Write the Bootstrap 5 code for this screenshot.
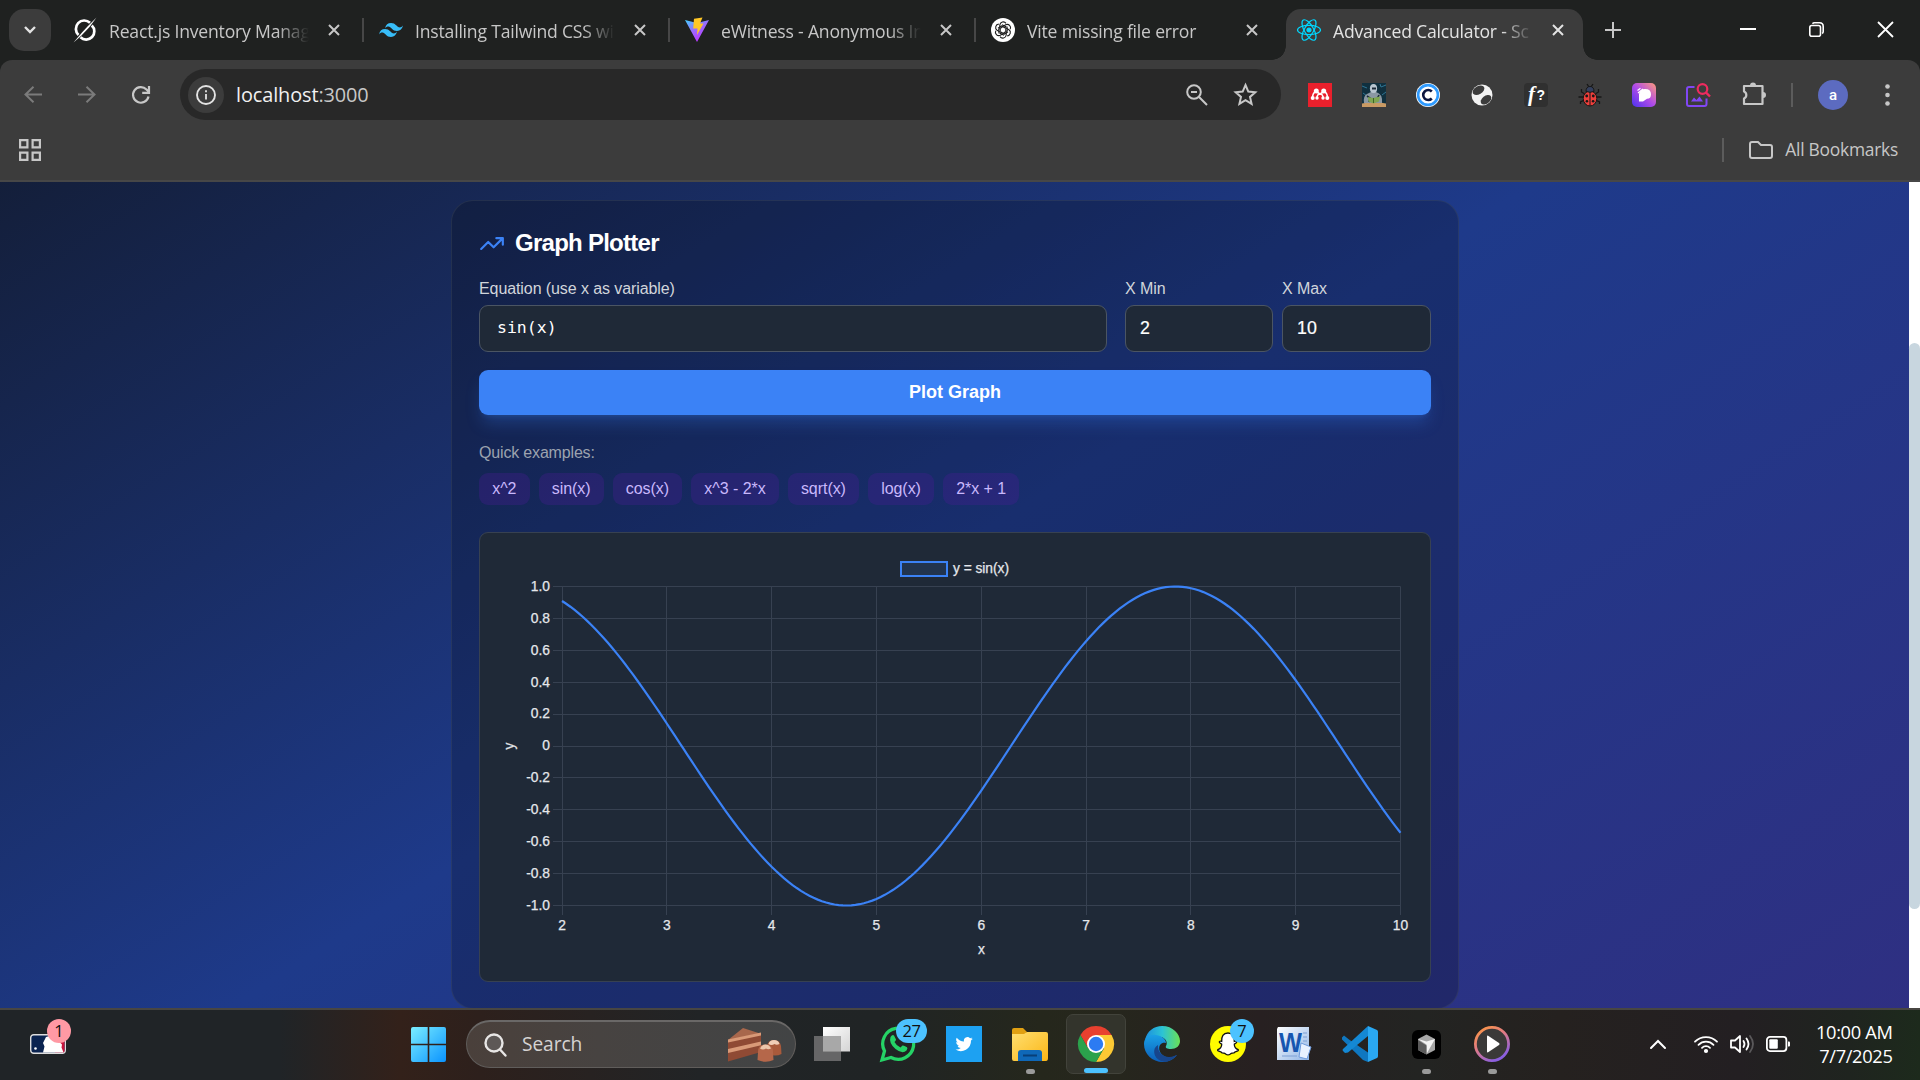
<!DOCTYPE html>
<html lang="en" data-bs-theme="dark">
<head>
<meta charset="utf-8">
<title>Advanced Calculator - Scientific</title>
<link href="https://cdn.jsdelivr.net/npm/bootstrap@5.3.0/dist/css/bootstrap.min.css" rel="stylesheet">
<style>
html,body{width:1920px;height:1080px;overflow:hidden}
body{font-family:"Open Sans","Noto Sans",sans-serif;background:#1f2120;color:#e3e3e3}
svg{display:block;overflow:visible;flex:none}
/* tab strip */
.tabstrip{height:60px;background:#1f2120;padding-left:9px}
.tab-search{width:42px;height:42px;border-radius:15px;background:#3c3c3c;margin-right:7px}
.btab{width:306px;height:60px;padding-left:15px;position:relative;color:#c7c7c7;font-size:17.6px}
.btab .ttl{width:201px;margin-left:12px;padding-top:3px;white-space:nowrap;letter-spacing:-.2px;-webkit-mask-image:linear-gradient(90deg,#000 168px,transparent 200px)}
.btab .cls{margin-left:18px}
.btab.split::after{content:"";position:absolute;right:0;top:18px;width:2px;height:24px;background:#474747}
.btab.on{width:297px;height:51px;margin:9px 0 0 4px;padding:0 0 9px 11px;background:#3c3c3c;border-radius:15px 15px 0 0;color:#e3e3e3}
.btab.on .cls{margin-left:18px}
.btab.on::before,.btab.on::after{content:"";position:absolute;bottom:0;width:14px;height:14px}
.btab.on::before{left:-14px;background:radial-gradient(circle at 0 0,transparent 13.5px,#3c3c3c 14px)}
.btab.on::after{right:-14px;background:radial-gradient(circle at 100% 0,transparent 13.5px,#3c3c3c 14px)}
.newtab{width:60px;height:60px}
.winbtn{width:69px;height:58px}
/* toolbar */
.toolbar{height:60px;background:#3c3c3c;padding:9px 0 0 6px;border-radius:12px 12px 0 0}
.cell54{width:54px;height:51px}
.omni{width:1101px;height:51px;border-radius:26px;background:#282828;margin:0 12px;padding:0 23px 0 8px}
.info-dot{width:36px;height:36px;border-radius:50%;background:#3c3c3c}
.url{font-size:19.9px;margin-left:12px;letter-spacing:-.1px;color:#c7c7c7}
.url b{font-weight:400;color:#f1f1f1}
.vline{width:2px;height:24px;background:#5c5c5c}
.avatar{width:30px;height:30px;border-radius:50%;background:#5c6bc0;font:500 15px Roboto,sans-serif;color:#fff}
.bookbar{height:62px;background:#3c3c3c;border-bottom:2px solid #474747;padding:0 22px 0 19px;font-size:17.4px;color:#c7c7c7}
/* page */
.view{height:826px;overflow:hidden}
.page-bg{width:1909px;background:linear-gradient(to bottom right,#111827,#1e3a8a,#312e81) 0 -235px/1909px 1205px no-repeat;font-family:"Liberation Sans",Arial,sans-serif;padding:18px 0 0 451px}
.plot-card{width:1008px;height:809px;border:1.5px solid rgba(75,85,99,.3);border-radius:22px;background:rgba(0,0,0,.2);padding:25px 27px 0 27px}
.plot-card h2{font-size:24px;letter-spacing:-.74px;line-height:34px;margin:0 0 0 10px;color:#fff;font-weight:700}
.lbl{font-size:16px;line-height:24px;color:#d1d5db;letter-spacing:-.09px;padding-top:1px;margin-bottom:4px}
.field{height:47px;border:1px solid #4b5563;border-radius:9px;background:#1f2937;color:#fff;font-size:17.8px;padding:0 14px;-webkit-text-stroke:.2px #fff}
.field.mono{font-family:"DejaVu Sans Mono",monospace;font-size:16.5px;padding-left:17px;-webkit-text-stroke:0}
.w-eq{width:628px}.w-min{width:148px}.w-max{width:149px}
.btn-plot{height:45px;border:0;border-radius:9px;background:#3b82f6;color:#fff;font-weight:700;font-size:18px;margin-top:18px;box-shadow:0 11px 16px -3px rgba(59,130,246,.26),0 4px 6px -4px rgba(59,130,246,.26)}
.quick{font-size:16px;line-height:24px;letter-spacing:-.17px;color:#9ca3af;margin:26px 0 8px}
.chip{height:32px;border-radius:9px;background:rgba(76,29,149,.32);color:#c9b8fc;font-size:16px;letter-spacing:-.05px;padding:0 13.2px;line-height:31px}
.chart-box{margin-top:27px;height:450px;border:1px solid #374151;border-radius:9px;background:#1f2937}
.chart-box text{font:13.8px "Liberation Sans",Arial,sans-serif;fill:#e5e7eb;stroke:#e5e7eb;stroke-width:.25px}
.sbar{width:11px;background:#fff;padding-top:161px}
.thumb{height:566px;border-radius:6px;background:#c8d6df}
/* taskbar */
.taskbar{height:72px;border-top:2px solid #484642;padding-bottom:2px;background:linear-gradient(90deg,#202427 0,#202427 280px,#33211a 400px,#2d201c 480px,#212426 700px,#202425 880px,#25271c 1040px,#26261d 1120px,#272021 1260px,#232422 1420px,#25211f 1560px,#231f22 1740px,#1f241f 1850px,#1d2a1c 1920px)}
.widget{width:36px;margin-left:30px;position:relative}
.start{margin-left:345px}
.find{width:330px;height:48px;border-radius:24px;margin:0 3px 0 20px;background:linear-gradient(90deg,#4a403b,#474341 40%,#424445);border:1px solid #605d5b;border-top:2px solid #6a6867;padding:0 13px 0 15px;font-size:19.2px;color:#d5d3d2}
.tapp{width:66px;height:60px;position:relative}
.tapp.run::after{content:"";position:absolute;left:28.500px;bottom:0;width:9px;height:5px;border-radius:3px;background:#9a9a9a}
.tapp.cur{background:#33342c;border:1px solid #42433b;border-radius:7px;width:60px;margin:0 3px}
.tapp.cur::after{content:"";position:absolute;left:17px;bottom:0;width:24px;height:5px;border-radius:3px;background:#4cc2ff}
.cnt{position:absolute;height:24px;border-radius:15px;background:#4cc2ff;color:#101010;font-size:16.5px;line-height:23px;text-align:center}
.cnt.c1{left:17px;top:-15.500px;width:24px;background:#ff99a4}
.cnt.c27{left:31px;top:5px;width:31px;letter-spacing:-.5px}
.cnt.c7{left:35px;top:5px;width:24px}
.clock{font-size:18.3px;line-height:24px;text-align:right;color:#fff;letter-spacing:-.35px;width:113px;margin-left:-10px;margin-right:27.500px;padding-bottom:1px}
</style>
<script src="https://cdn.jsdelivr.net/npm/bootstrap@5.3.0/dist/js/bootstrap.bundle.min.js"></script>
</head>
<body>
<svg width="0" height="0" class="position-absolute">
 <defs>
  <symbol id="x" viewBox="0 0 12 12"><path d="M1 1l10 10M11 1L1 11" stroke="currentColor" stroke-width="2" fill="none"/></symbol>
  <linearGradient id="vt" x1="0" y1="0" x2=".6" y2="1"><stop stop-color="#41d1ff"/><stop offset=".5" stop-color="#9a6bff"/><stop offset="1" stop-color="#bd34fe"/></linearGradient>
  <linearGradient id="win" gradientUnits="userSpaceOnUse" x1="0" y1="0" x2="35" y2="35"><stop stop-color="#7beeff"/><stop offset="1" stop-color="#0a93ff"/></linearGradient>
  <linearGradient id="pk" x1="0" y1="1" x2="1" y2="0"><stop stop-color="#4a32f0"/><stop offset=".5" stop-color="#b04be8"/><stop offset="1" stop-color="#ff9b7a"/></linearGradient>
  <linearGradient id="fold" x1="0" y1="0" x2="1" y2="1"><stop stop-color="#ffdf70"/><stop offset="1" stop-color="#fbb616"/></linearGradient>
  <linearGradient id="e1" x1="0" y1="0" x2="1" y2="0"><stop stop-color="#1c8fe0"/><stop offset=".5" stop-color="#2cc3d4"/><stop offset="1" stop-color="#6be055"/></linearGradient>
  <linearGradient id="e2" x1="0" y1="0" x2="0" y2="1"><stop stop-color="#1aa0e6"/><stop offset="1" stop-color="#0c5db8"/></linearGradient>
  <linearGradient id="md" x1="0" y1="0" x2=".6" y2="1"><stop stop-color="#ff9a3c"/><stop offset=".5" stop-color="#e07a86"/><stop offset="1" stop-color="#8a5fe0"/></linearGradient>
  <linearGradient id="tv" x1="0" y1="0" x2="1" y2="1"><stop stop-color="#fff"/><stop offset="1" stop-color="#d4d4d4"/></linearGradient>
  <linearGradient id="wd" x1="0" y1="0" x2="1" y2="1"><stop stop-color="#fff"/><stop offset="1" stop-color="#8fb4e6"/></linearGradient>
 </defs>
</svg>

<header>
 <div class="tabstrip d-flex">
  <button class="tab-search btn p-0 border-0 d-flex align-items-center justify-content-center align-self-center"><svg width="12" height="8" viewBox="0 0 12 8"><path d="M1 1l5 5 5-5" fill="none" stroke="#e3e3e3" stroke-width="2.400"/></svg></button>
  <div class="btab split d-flex align-items-center">
   <svg width="24" height="24" viewBox="0 0 24 24" fill="none" stroke="#fff"><path d="M17 4.800A8 8 0 0 0 5.500 17M7.500 19.300A8 8 0 0 0 18.800 7.500" stroke-width="2.700"/><path d="M23.500-.5L14.500 8.500 9 14.500.5 24.500 8 18l8.500-9z" fill="#fff" stroke="none"/></svg>
   <span class="ttl">React.js Inventory Manag</span><svg class="cls" width="12" height="12"><use href="#x"/></svg>
  </div>
  <div class="btab split d-flex align-items-center">
   <svg width="24" height="24" viewBox="0 0 24 24"><path id="tw" d="M6 10.500c.8-3.600 2.800-5.400 6-5.400 4.800 0 5.400 3.600 7.800 4.200 1.600.4 3-.2 4.200-1.800-.8 3.600-2.800 5.400-6 5.400-4.800 0-5.400-3.600-7.800-4.200-1.600-.4-3 .2-4.200 1.800z" fill="#38bdf8"/><use href="#tw" x="-6" y="6"/></svg>
   <span class="ttl">Installing Tailwind CSS wi</span><svg class="cls" width="12" height="12"><use href="#x"/></svg>
  </div>
  <div class="btab split d-flex align-items-center">
   <svg width="24" height="24" viewBox="0 0 24 24"><path d="M0 2l12 22L24 2l-12 3z" fill="url(#vt)"/><path d="M9 .8l8.500-1.300-2.500 6h3.500L12 17l.5-6.500H8.200z" fill="#ffc726"/></svg>
   <span class="ttl">eWitness - Anonymous In</span><svg class="cls" width="12" height="12"><use href="#x"/></svg>
  </div>
  <div class="btab d-flex align-items-center">
   <svg width="24" height="24" viewBox="-12 -12 24 24"><circle r="12" fill="#fff"/><g fill="none" stroke="#1c1c1c" stroke-width="1.100"><path id="oa" d="M-3.200-1.800V-5A3.400 3.400 0 0 1 3-6.600M-1-5.200L2.800-3.300V1"/><use href="#oa" transform="rotate(60)"/><use href="#oa" transform="rotate(120)"/><use href="#oa" transform="rotate(180)"/><use href="#oa" transform="rotate(240)"/><use href="#oa" transform="rotate(300)"/></g></svg>
   <span class="ttl">Vite missing file error</span><svg class="cls" width="12" height="12"><use href="#x"/></svg>
  </div>
  <div class="btab on d-flex align-items-center">
   <svg width="24" height="24" viewBox="-12 -12 24 24" fill="none" stroke="#00d8ff" stroke-width="1.200"><ellipse rx="11.500" ry="4.600"/><ellipse rx="11.500" ry="4.600" transform="rotate(60)"/><ellipse rx="11.500" ry="4.600" transform="rotate(120)"/><circle r="2" fill="#00d8ff"/></svg>
   <span class="ttl">Advanced Calculator - Sc</span><svg class="cls" width="12" height="12"><use href="#x"/></svg>
  </div>
  <div class="newtab d-flex align-items-center justify-content-center"><svg width="16" height="16" viewBox="0 0 16 16"><path d="M8 0v16M0 8h16" stroke="#c7c7c7" stroke-width="2"/></svg></div>
  <div class="d-flex ms-auto">
   <div class="winbtn d-flex align-items-center justify-content-center"><svg width="16" height="2"><path d="M0 1h16" stroke="#fff" stroke-width="2"/></svg></div>
   <div class="winbtn d-flex align-items-center justify-content-center"><svg width="15" height="15" viewBox="0 0 15 15" fill="none" stroke="#fff" stroke-width="1.600"><rect x=".8" y="3.500" width="10.700" height="10.700" rx="2"/><path d="M3.500 1.800Q4.200.8 5.500.8h5q3.700 0 3.700 3.700v5q0 1.300-1 2"/></svg></div>
   <div class="winbtn d-flex align-items-center justify-content-center"><svg width="15" height="15" viewBox="0 0 15 15"><path d="M0 0l15 15M15 0L0 15" stroke="#fff" stroke-width="1.800"/></svg></div>
  </div>
 </div>

 <div class="toolbar d-flex">
  <div class="cell54 d-flex align-items-center justify-content-center"><svg width="18" height="17" viewBox="0 0 18 17" fill="none" stroke="#7b7b7b" stroke-width="2"><path d="M18 8.500H2M9.500.7L1.500 8.500l8 7.800"/></svg></div>
  <div class="cell54 d-flex align-items-center justify-content-center"><svg width="18" height="17" viewBox="0 0 18 17" fill="none" stroke="#7b7b7b" stroke-width="2"><path d="M0 8.500h16M8.500.7l8 7.800-8 7.800"/></svg></div>
  <div class="cell54 d-flex align-items-center justify-content-center"><svg width="18" height="18" viewBox="0 0 18 18" fill="none" stroke="#c7c7c7" stroke-width="2.200"><path d="M16.500 10.500A7.800 7.800 0 1 1 14.500 3.500L17 6M17 0v6.800h-6.800"/></svg></div>
  <div class="omni d-flex align-items-center">
   <span class="info-dot d-flex align-items-center justify-content-center"><svg width="20" height="20" viewBox="0 0 20 20"><circle cx="10" cy="10" r="9" fill="none" stroke="#e3e3e3" stroke-width="1.900"/><path d="M10 9v5.500M10 5.300v2" stroke="#e3e3e3" stroke-width="1.800"/></svg></span>
   <span class="url"><b>localhost</b>:3000</span>
   <svg class="ms-auto" width="22" height="22" viewBox="0 0 22 22" fill="none" stroke="#c7c7c7" stroke-width="2"><circle cx="8" cy="8" r="6.800"/><path d="M5 8h6M12.800 12.800L21 21"/></svg>
   <svg style="margin-left:25px" width="25" height="24" viewBox="0 0 24 24" fill="none" stroke="#c7c7c7" stroke-width="2"><path d="M12 2l2.800 6.600 7 .6-5.300 4.700 1.600 7L12 17.200l-6.100 3.700 1.600-7L2.200 9.200l7-.6z"/></svg>
  </div>
  <div class="cell54 d-flex align-items-center justify-content-center"><svg width="24" height="24" viewBox="0 0 24 24"><path fill="#e9202c" d="M0 0h24v24H0z"/><path d="M4.700 15q-.5-4.500 3-6.500M19.300 15q.5-4.500-3-6.500M8 8.500l4 2.500 4-2.500M9 15q0-4 3-4t3 4" stroke="#fff" stroke-width="1.500" fill="none"/><g fill="#fff"><circle cx="8.300" cy="8" r="2.500"/><circle cx="15.700" cy="8" r="2.500"/><circle cx="4.700" cy="15" r="2"/><circle cx="19.300" cy="15" r="2"/><circle cx="9" cy="15" r="1.700"/><circle cx="15" cy="15" r="1.700"/></g></svg></div>
  <div class="cell54 d-flex align-items-center justify-content-center"><svg width="24" height="24" viewBox="0 0 24 24"><path fill="#10303f" d="M0 0h24v24H0z"/><path d="M0 3l5 2M19 4l5-2M1 10l4 3M24 9l-4 3M18 1l1 3" stroke="#2f7594"/><path d="M0 20.500q12-3 24 0V24H0z" fill="#c99a64"/><path d="M2 20q-1-7 3-9l4-2h5q7 2 6 11z" fill="#8b98a3"/><path d="M5 13l3 2-1 4M17 12l-2 4" stroke="#1c2d39" stroke-width="1.600" fill="none"/><ellipse cx="11.500" cy="5.500" rx="3.600" ry="4.500" fill="#b9c5cf"/><path d="M10 4.500h4v2h-4z" fill="#1d2b38"/><path d="M6 14l5 1 7-1.500-1 5-5.500 2-5-2z" fill="#7fa651"/><path d="M11.500 15v5" stroke="#3e6427"/></svg></div>
  <div class="cell54 d-flex align-items-center justify-content-center"><svg width="24" height="24" viewBox="0 0 24 24"><circle cx="12" cy="12" r="12" fill="#fff"/><circle cx="12" cy="12" r="9.900" fill="none" stroke="#2f9bff" stroke-width="2.600"/><path d="M15.800 8.500a5 5 0 1 0 0 7" fill="none" stroke="#0b1540" stroke-width="2.600"/></svg></div>
  <div class="cell54 d-flex align-items-center justify-content-center"><svg width="22" height="22" viewBox="0 0 22 22"><circle cx="11" cy="11" r="10.500" fill="#f3f3f3"/><ellipse cx="7.500" cy="6.300" rx="6.400" ry="4" transform="rotate(-30 7.500 6.300)" fill="#3c3c3c"/><ellipse cx="15" cy="15.800" rx="6" ry="3.900" transform="rotate(-38 15 15.800)" fill="#3c3c3c"/></svg></div>
  <div class="cell54 d-flex align-items-center justify-content-center"><svg width="24" height="24" viewBox="0 0 24 24"><rect width="24" height="24" rx="4" fill="#303030"/><text x="4" y="18" font-family="Liberation Serif,serif" font-style="italic" font-weight="700" font-size="21" fill="#fff">f</text><text x="12.500" y="17" font-family="Liberation Sans,sans-serif" font-weight="700" font-size="14" fill="#fff">?</text></svg></div>
  <div class="cell54 d-flex align-items-center justify-content-center"><svg width="24" height="24" viewBox="0 0 24 24"><path d="M3.500 6v3l4 2.500M20.500 6v3l-4 2.500M.5 14h23M2.500 21v-2l4-2M21.500 21v-2l-4-2M9 1l2 3M15 1l-2 3" stroke="#171717" stroke-width="1.300" fill="none"/><ellipse cx="12" cy="15.500" rx="6.800" ry="7.500" fill="#ee3f3b" stroke="#171717"/><path d="M8 8.500q0-5 4-5t4 5q-4 1.500-8 0z" fill="#34405e" stroke="#171717"/><path d="M12 9v14" stroke="#171717"/><g fill="#171717"><circle cx="8.700" cy="13" r="1.400"/><circle cx="15.300" cy="13" r="1.400"/><circle cx="8.900" cy="18.300" r="1.300"/><circle cx="15.100" cy="18.300" r="1.300"/></g></svg></div>
  <div class="cell54 d-flex align-items-center justify-content-center"><svg width="24" height="24" viewBox="0 0 24 24"><rect width="24" height="24" rx="5" fill="url(#pk)"/><path d="M7 18.500V11q1-5 6-5 6 0 6 5.200 0 4.500-4 4.500l-4 2.800z" fill="#fff"/><path d="M6 10l5-4M5.500 7.500l3-2.200" stroke="#fff" stroke-width="1.200"/></svg></div>
  <div class="cell54 d-flex align-items-center justify-content-center"><svg width="24" height="24" viewBox="0 0 24 24" fill="none" stroke="#8147f5" stroke-width="2"><path d="M8.500 4H3q-2 0-2 2v15q0 2 2 2h15.500q2 0 2-2v-5.500"/><path d="M5 18.500l3-4 2.500 2.500 3-3.500 3.500 5z" fill="#8147f5" stroke="none"/><circle cx="16.500" cy="6" r="4.800" stroke="#ee2b5f" stroke-width="2.200"/><path d="M19.800 9.300L24 13.500" stroke="#ee2b5f" stroke-width="2.400"/></svg></div>
  <div class="cell54 d-flex align-items-center justify-content-center ps-1"><svg width="25" height="25" viewBox="0 0 25 25"><path d="M2 4h18.500v18H2v-5.500a3.800 3.800 0 0 0 0-7z" fill="none" stroke="#c7c7c7" stroke-width="2.200" stroke-linejoin="round"/><path d="M8 3.500a3 3 0 0 1 6 0zM21 10a3 3 0 0 1 0 6z" fill="#c7c7c7"/></svg></div>
  <div class="d-flex align-items-center justify-content-center" style="width:26px"><span class="vline"></span></div>
  <div class="d-flex align-items-center justify-content-center" style="width:56px"><span class="avatar d-flex align-items-center justify-content-center">a</span></div>
  <div class="d-flex align-items-center justify-content-center" style="width:52px"><svg width="5" height="22" fill="#c7c7c7"><circle cx="2.500" cy="2.500" r="2.300"/><circle cx="2.500" cy="11" r="2.300"/><circle cx="2.500" cy="19.500" r="2.300"/></svg></div>
 </div>

 <div class="bookbar d-flex align-items-center">
  <svg width="22" height="22" viewBox="0 0 22 22" fill="none" stroke="#c7c7c7" stroke-width="2.200"><path d="M1.100 1.100h7.300v7.300H1.100zM13.600 1.100h7.300v7.300h-7.300zM1.100 13.600h7.300v7.300H1.100zM13.600 13.600h7.300v7.300h-7.300z"/></svg>
  <span class="vline ms-auto"></span>
  <svg style="margin:0 12px 0 25px" width="24" height="18" viewBox="0 0 24 18"><path d="M1 3q0-2 2-2h6l3 3h9q2 0 2 2v9q0 2-2 2H3q-2 0-2-2z" fill="none" stroke="#c7c7c7" stroke-width="2"/></svg>
  <span style="letter-spacing:-.24px;padding-bottom:2px">All Bookmarks</span>
 </div>
</header>

<main class="view d-flex">
 <div class="page-bg">
  <section class="plot-card">
   <div class="d-flex align-items-center">
    <svg width="26" height="26" viewBox="0 0 24 24" fill="none" stroke="#3b82f6" stroke-width="2" stroke-linejoin="round" stroke-linecap="round"><path d="M22 7.500l-8.500 8.500-5-5L2 17.500M16 7.500h6v6"/></svg>
    <h2>Graph Plotter</h2>
   </div>
   <div class="d-flex" style="margin-top:16px">
    <div class="w-eq"><div class="lbl">Equation (use x as variable)</div><div class="field mono d-flex align-items-center">sin(x)</div></div>
    <div class="w-min" style="margin-left:18px"><div class="lbl">X Min</div><div class="field d-flex align-items-center">2</div></div>
    <div class="w-max" style="margin-left:9px"><div class="lbl">X Max</div><div class="field d-flex align-items-center">10</div></div>
   </div>
   <button class="btn btn-plot w-100 p-0 d-block">Plot Graph</button>
   <div class="quick">Quick examples:</div>
   <div class="d-flex" style="gap:8.900px">
    <span class="chip">x^2</span><span class="chip">sin(x)</span><span class="chip">cos(x)</span><span class="chip">x^3 - 2*x</span><span class="chip">sqrt(x)</span><span class="chip">log(x)</span><span class="chip">2*x + 1</span>
   </div>
   <div class="chart-box"><svg id="chart" width="950" height="448" viewBox="480 533 950 448"></svg></div>
  </section>
 </div>
 <div class="sbar"><div class="thumb"></div></div>
</main>

<footer class="taskbar d-flex align-items-center">
 <div class="widget"><svg width="36" height="20" viewBox="0 0 36 20"><rect x=".7" y=".7" width="34.600" height="18.600" rx="3" fill="#0a2350" stroke="#ddd" stroke-width="1.400"/><path d="M25 1.500h8q1.500 0 1.500 1.500v14q0 1.500-1.500 1.500h-8z" fill="#c8143c"/><path d="M13 18.500l1.500-6L13 9l3-6 5-1.500h5l2 5 4 4-.5 3 2 5z" fill="#fff"/><circle cx="5.500" cy="14.500" r="1.300" fill="#fff"/></svg><span class="cnt c1">1</span></div>
 <svg class="start" width="35" height="35" viewBox="0 0 35 35"><path d="M2 0h14.700v16.700H0V2q0-2 2-2zM18.300 0H33q2 0 2 2v14.700H18.300zM0 18.300h16.700V35H2q-2 0-2-2zM18.300 18.300H35V33q0 2-2 2H18.300z" fill="url(#win)"/></svg>
 <div class="find d-flex align-items-center">
  <svg width="26" height="26" viewBox="0 0 26 26" fill="#5d5856" stroke="#e8e6e5" stroke-width="2.400"><circle cx="12" cy="11" r="8.500"/><path d="M18 17.500l5.500 6" stroke-linecap="round"/></svg>
  <span style="margin-left:14px;letter-spacing:-.1px">Search</span>
  <svg class="ms-auto" width="54" height="34" viewBox="0 0 54 34"><path d="M0 12L15 0l17 5.500V9L0 15z" fill="#a8674c"/><path d="M0 12L33 5v19L0 33.500z" fill="#8f4a34"/><path d="M0 11.500L33 4.500v3L0 14.500zM0 21L33 13.500v3.800L0 25z" fill="#d99a78"/><path d="M39 18q1-6 7-6t7 6l.5 8q-6 3-14 0z" fill="#a95a3b"/><path d="M40.500 16q1-4 5.500-4t5.500 4q-3 1.500-5 0-3 2-6 0z" fill="#f0cdb6"/><path d="M30 24q0-7.500 7.500-7.500T45 24l.5 8q-7.500 3.500-16 0z" fill="#b5674a"/><path d="M32 20.500q1.500-4 5.500-4t5.500 4q-3 1.500-5 0-3 2-6 0z" fill="#edc5aa"/></svg>
 </div>
 <div class="tapp d-flex align-items-center justify-content-center"><svg width="36" height="34" viewBox="0 0 36 34"><path d="M9 0h27v24.500H9z" fill="url(#tv)"/><path d="M0 9h27v25H0z" fill="#6d6d6d" fill-opacity=".92"/><path d="M9 9h18v15.500H9z" fill="#a8a8a8"/></svg></div>
 <div class="tapp d-flex align-items-center justify-content-center"><svg width="36" height="36" viewBox="0 0 36 36"><path d="M2 34l2.500-9A15.500 15.500 0 1 1 11 31.500z" fill="none" stroke="#25d366" stroke-width="3.300"/><path d="M10.500 11q2-3 3.500-1.500l2 4q0 1-1.500 2.500 2 4 6 5.500l2-2q1-.5 4.500 1.700 1 .8-.5 3.300-4 4-11-1.500-7-6-5-12z" fill="#25d366"/></svg><span class="cnt c27">27</span></div>
 <div class="tapp d-flex align-items-center justify-content-center"><svg width="36" height="36" viewBox="0 0 36 36"><path d="M0 0h36v36H0z" fill="#1da1f2"/><path transform="translate(9.500 9.500) scale(.72)" d="M24 4.600a10 10 0 0 1-2.800.8 5 5 0 0 0 2.100-2.700 10 10 0 0 1-3.100 1.200 4.900 4.900 0 0 0-8.400 4.500A14 14 0 0 1 1.700 3.200a4.900 4.900 0 0 0 1.500 6.500 5 5 0 0 1-2.200-.6 4.900 4.900 0 0 0 3.900 4.900 5 5 0 0 1-2.200.1 4.900 4.900 0 0 0 4.600 3.400A10 10 0 0 1 0 19.500 14 14 0 0 0 21.500 7.100 10 10 0 0 0 24 4.600z" fill="#fff"/></svg></div>
 <div class="tapp run d-flex align-items-center justify-content-center"><svg width="36" height="33" viewBox="0 0 36 33"><path d="M0 2q0-2 2-2h9l4 4-2 4H0z" fill="#e0a012"/><path d="M0 6h12l3-2h19q2 0 2 2v24q0 3-2 3H2q-2 0-2-2z" fill="url(#fold)"/><path d="M6 33v-8q0-3 3-3h18q3 0 3 3v8z" fill="#0f68b8"/><path d="M11 27.500h14" stroke="#083f78" stroke-width="2"/></svg></div>
 <div class="tapp cur d-flex align-items-center justify-content-center"><svg width="36" height="36" viewBox="-18 -18 36 36"><path d="M-15.600-9A18 18 0 0 1 15.600-9H0L-7.800 4.500z" fill="#e8402f"/><path d="M15.600-9A18 18 0 0 1 0 18L7.800 4.500 0-9z" fill="#fcc934"/><path d="M0 18A18 18 0 0 1-15.600-9L-7.800 4.500 0 9l7.800-4.500z" fill="#2ba24c"/><circle r="9" fill="#fff"/><circle r="7.200" fill="#2c7bf2"/></svg></div>
 <div class="tapp d-flex align-items-center justify-content-center"><svg width="36" height="36" viewBox="0 0 36 36"><path d="M1 14C3 5 10 0 18 0c11 0 18 8 18 15 0 5-4 8-9 8-4 0-6-1-5-3 2-3 0-8-5-9S4 11 1 14z" fill="url(#e1)"/><path d="M0 18C0 11 6 8 12 9c7 1 10 5 10 8-8-2-10 10 0 14 4 1 8 0 11-2-3 4-8 7-14 7C8 36 0 28 0 18z" fill="url(#e2)"/><path d="M14 19c-1 7 5 12 11 12 4 0 7-2 8-2-4 5-10 8-16 6-8-3-9-13-3-16z" fill="#17458c"/></svg></div>
 <div class="tapp d-flex align-items-center justify-content-center"><svg width="36" height="36" viewBox="0 0 36 36"><circle cx="18" cy="18" r="18" fill="#fffc00"/><path d="M18 7c5 0 6.500 3.500 6.300 8.300 2-.8 3 .5 2 1.500l-2 1.400c0 3 2 4.800 4 5.500.7 1.300-2 1.700-3.300 2.200-.3 1.500-1 1.300-3 1.200-1.500.2-2 1.800-4 1.800s-2.500-1.600-4-1.800c-2 .1-2.700.3-3-1.200-1.300-.5-4-.9-3.300-2.200 2-.7 4-2.500 4-5.500l-2-1.400c-1-1 0-2.300 2-1.500C11.500 10.500 13 7 18 7z" fill="#fff" stroke="#111" stroke-width="1.300"/></svg><span class="cnt c7">7</span></div>
 <div class="tapp d-flex align-items-center justify-content-center"><svg width="34" height="34" viewBox="0 0 34 34"><path d="M1 0h31v33H0V2z" fill="url(#wd)"/><path d="M5 29h15M26 6h4M26 10h4M26 14h4" stroke="#7d9fd4"/><path d="M24 16l10 4-4 12-8-2z" fill="#e8f1ff" stroke="#6f9bdc"/><text x="2" y="25" font-family="Liberation Sans,sans-serif" font-weight="700" font-size="27" textLength="23" lengthAdjust="spacingAndGlyphs" fill="#1656b0">W</text></svg></div>
 <div class="tapp d-flex align-items-center justify-content-center"><svg width="36" height="36" viewBox="0 0 36 36"><path d="M26 0l9 4q1 .5 1 2v24q0 1.500-1 2l-9 4z" fill="#2aa8f2"/><path d="M26 9.500v17L7 13.500 2 9.500l-2 2 0 2L21 34l5 2V26z" fill="#0f77c0" /><path d="M26 0L1 23q-1 1 0 2l2 2 3-.5L26 10z" fill="#1488d4"/></svg></div>
 <div class="tapp run d-flex align-items-center justify-content-center"><svg width="29" height="29" viewBox="0 0 29 29"><rect width="29" height="29" rx="6" fill="#000"/><path d="M14.500 4.500l8.500 4.500v11l-8.500 4.500L6 20V9z" fill="#a5a5a5"/><path d="M6 9l8.500 2.500L23 9l-8.500 15v-9.500z" fill="#f2f2f2"/><path d="M6 10v10l8.500 4.500v-9z" fill="#5a5a5a"/></svg></div>
 <div class="tapp run d-flex align-items-center justify-content-center"><svg width="36" height="36" viewBox="0 0 36 36"><circle cx="18" cy="18" r="16.600" fill="#3a3938" stroke="url(#md)" stroke-width="2.800"/><path d="M13 10.500q0-1.500 1.500-.6L25 17q1.300 1 0 2l-10.500 7.100q-1.500.9-1.500-.6z" fill="#fff"/></svg></div>
 <div class="d-flex align-items-center ms-auto">
  <svg width="16" height="9" viewBox="0 0 16 9"><path d="M1 8l7-7 7 7" fill="none" stroke="#fff" stroke-width="2" stroke-linecap="round"/></svg>
  <svg style="margin-left:28px" width="24" height="18" viewBox="0 0 24 18" fill="none" stroke="#fff" stroke-width="1.800" stroke-linecap="round"><path d="M1 6.700a15.500 15.500 0 0 1 22 0M4.500 9.800a10.600 10.600 0 0 1 15 0M8 12.800a5.700 5.700 0 0 1 8 0"/><circle cx="12" cy="16" r="1.200" fill="#fff"/></svg>
  <svg style="margin-left:12px" width="24" height="20" viewBox="0 0 24 20" fill="none" stroke="#fff" stroke-width="1.800" stroke-linecap="round" stroke-linejoin="round"><path d="M1 6.500h4L10 2v16l-5-4.500H1zM13.500 7q2 3 0 6M16.500 4.500q4 5.500 0 11"/><path d="M20 2q6 8 0 16" stroke="#5a585a"/></svg>
  <svg style="margin-left:12px" width="24" height="16" viewBox="0 0 24 16"><rect x=".9" y=".9" width="19.500" height="14.200" rx="3" fill="none" stroke="#fff" stroke-width="1.800"/><rect x="3.300" y="3.300" width="8.500" height="9.400" rx="1" fill="#fff"/><path d="M22 5.500h1q1 0 1 1v3q0 1-1 1h-1z" fill="#fff"/></svg>
 </div>
 <div class="clock">10:00 AM<br>7/7/2025</div>
</footer>

<script>
// Plot y = sin(x) over [2, 10]
const L=562,R=1400.5,T=586.5,B=905.5,X0=2,X1=10;
const px=x=>L+(x-X0)/(X1-X0)*(R-L), py=y=>T+(1-y)/2*(B-T);
let s='<g stroke="#374151" fill="none">';
for(let i=0;i<=10;i++){const y=Math.floor(T+i*(B-T)/10)+.5;s+=`<path d="M553 ${y}H${R}"/>`}
for(let i=2;i<=10;i++){const x=Math.floor(px(i))+.5;s+=`<path d="M${x} ${T}V915"/>`}
s+='</g>';
for(let i=0;i<=10;i++){const v=1-i*.2;s+=`<text x="550" y="${T+i*(B-T)/10+4.3}" text-anchor="end">${Math.abs(v)<.01?'0':v.toFixed(1)}</text>`}
for(let i=2;i<=10;i++)s+=`<text x="${px(i)}" y="930" text-anchor="middle">${i}</text>`;
s+='<text x="981.500" y="954" text-anchor="middle">x</text><text transform="translate(514 746) rotate(-90)" text-anchor="middle">y</text>';
s+='<rect x="901" y="562" width="46" height="14" fill="#3b82f6" fill-opacity=".12" stroke="#3b82f6" stroke-width="2"/><text x="953" y="573" textLength="56">y = sin(x)</text>';
let d='';for(let x=X0;x<=X1+.001;x+=.04)d+=(d?'L':'M')+px(x).toFixed(2)+' '+py(Math.sin(x)).toFixed(2);
document.getElementById('chart').innerHTML=s+`<path d="${d}" fill="none" stroke="#3b82f6" stroke-width="2.200"/>`;
</script>
</body>
</html>
